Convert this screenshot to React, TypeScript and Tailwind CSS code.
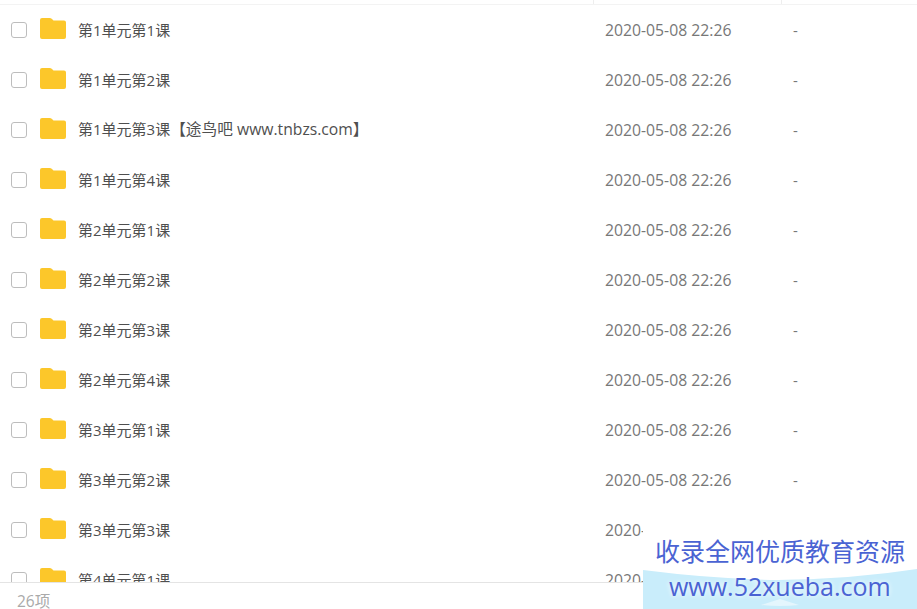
const rows: [string, string?][] = [
  ['第1单元第1课'],
  ['第1单元第2课'],
  ['第1单元第3课', '【途鸟吧 www.tnbzs.com】'],
  ['第1单元第4课'],
  ['第2单元第1课'],
  ['第2单元第2课'],
  ['第2单元第3课'],
  ['第2单元第4课'],
  ['第3单元第1课'],
  ['第3单元第2课'],
  ['第3单元第3课'],
  ['第4单元第1课'],
];

function Folder() {
  return (
    <svg width="26" height="21" viewBox="0 0 26 21" className="shrink-0">
      <path
        d="M0 2 Q0 0 2 0 H9.5 Q11 0 12 1 L13.5 2.5 H24 Q26 2.5 26 4.5 V19 Q26 21 24 21 H2 Q0 21 0 19 Z"
        fill="#fcc72a"
      />
    </svg>
  );
}

function Row({ name, tail }: { name: string; tail?: string }) {
  return (
    <div className="flex h-[50px] shrink-0 items-center">
      <div className="ml-[11px] h-4 w-4 shrink-0 rounded-[3px] border border-[#bdbdbd] bg-white" />
      <div className="ml-[13px] mb-[3px]">
        <Folder />
      </div>
      <div className="ml-3 w-[527px] whitespace-nowrap text-[15px] text-[#4f4f4f]">
        {name}
        {tail && <span className="text-[15.7px]">{tail}</span>}
      </div>
      <div className="w-[188px] pt-[2px] text-[15.75px] text-[#777]">2020-05-08 22:26</div>
      <div className="text-[15px] text-[#777]">-</div>
    </div>
  );
}

export default function App() {
  return (
    <div
      className="relative flex h-[609px] w-[917px] flex-col overflow-hidden bg-white"
      style={{ fontFamily: '"Open Sans", "Noto Sans CJK SC", sans-serif' }}
    >
      <div className="flex h-[5px] shrink-0 border-b border-[#f3f3f3]">
        <div className="w-[594px] border-r border-[#eeeeee]" />
        <div className="w-[188px] border-r border-[#eeeeee]" />
      </div>
      <div className="flex min-h-0 flex-1 flex-col overflow-hidden">
        {rows.map(([name, tail]) => (
          <Row key={name} name={name} tail={tail} />
        ))}
      </div>
      <div className="flex h-[27px] shrink-0 items-center border-t border-[#e4e4e4] bg-white pl-[17px] pt-[12px] text-[15.5px] text-[#aaa]">
        26项
      </div>

      {/* watermark in the corner */}
      <div className="absolute bottom-0 right-0 h-[90px] w-[274px] bg-white">
        <svg width="274" height="40" viewBox="0 0 274 40" className="absolute bottom-0 left-0">
          <path d="M0 1 Q70 10 135 11 Q210 10 274 0 V40 H0 Z" fill="#c9edfb" />
          <path d="M118 36 L137 30 L156 36 Q137 38 118 36 Z" fill="#e4f6fd" />
        </svg>
        <div className="absolute left-[12px] top-[16px] whitespace-nowrap text-[25px] leading-[32px] text-[#4a63d3] [text-shadow:0_0_5px_#ffffff]">
          收录全网优质教育资源
        </div>
        <div className="absolute left-[26px] top-[51px] whitespace-nowrap text-[25px] leading-[32px] text-[#4a63d3] [text-shadow:0_0_5px_#ffffff]">
          www.52xueba.com
        </div>
      </div>
    </div>
  );
}
